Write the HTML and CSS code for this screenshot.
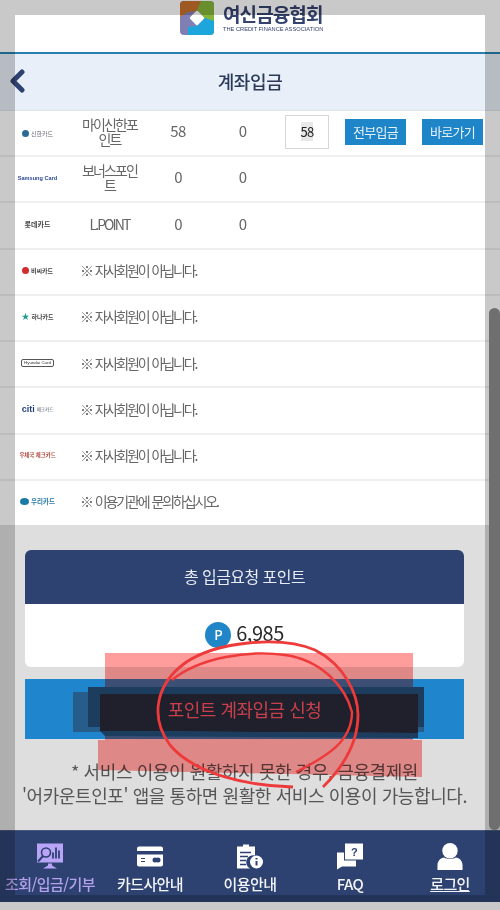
FILE: index.html

```html
<!DOCTYPE html>
<html lang="ko">
<head>
    <meta charset="UTF-8">
    <title>계좌입금</title>
    <link rel="stylesheet" href="styles.css">
</head>
<body>
<div id="page">
    <div class="top">
        <svg class="logo-mark" viewBox="0 0 34 34">
            <defs><clipPath id="logoclip"><rect width="34" height="34" rx="4"/></clipPath></defs>
            <g clip-path="url(#logoclip)">
                <rect width="34" height="34" fill="#7f7fb4"/>
                <path d="M0 0H27L17 10 8 11 0 16Z" fill="#c9702c"/>
                <path d="M21 0H34V24H26L24 16 17 9Z" fill="#84b53a"/>
                <path d="M8 34V26L17 25 25 17 34 20V34Z" fill="#1da6dc"/>
            </g>
            <rect x="11.5" y="11.5" width="11" height="11" rx="1.5" fill="#fff" transform="rotate(45 17 17)"/>
        </svg>
        <div class="logo-text">
            <div class="logo-ko">여신금융협회</div>
            <div class="logo-en">THE CREDIT FINANCE ASSOCIATION</div>
        </div>
    </div>
    <div class="title">
        <svg class="back" viewBox="0 0 16 24"><path d="M13 3L4 12l9 9" fill="none" stroke="#2d4270" stroke-width="5" stroke-linecap="round" stroke-linejoin="round"/></svg>
        <h1>계좌입금</h1>
    </div>
    <div class="list">
        <div class="row">
            <div class="brand brand-first"><i class="dot dot-shinhan"></i><span class="tiny">신한카드</span></div>
            <div class="name">마이신한포인트</div>
            <div class="pt">58</div>
            <div class="pt2">0</div>
            <div class="inp"><span>58</span></div>
            <div class="btn btn-first">전부입금</div>
            <div class="btn">바로가기</div>
        </div>
        <div class="row">
            <div class="brand"><span class="samsung">Samsung Card</span></div>
            <div class="name">보너스포인트</div>
            <div class="pt">0</div>
            <div class="pt2">0</div>
        </div>
        <div class="row">
            <div class="brand"><span class="tiny tiny-dark tiny-lotte">롯데카드</span></div>
            <div class="name">L.POINT</div>
            <div class="pt">0</div>
            <div class="pt2">0</div>
        </div>
        <div class="row">
            <div class="brand"><i class="dot dot-bc"></i><span class="tiny tiny-dark">비씨카드</span></div>
            <div class="msg">※ 자사회원이 아닙니다.</div>
        </div>
        <div class="row">
            <div class="brand"><i class="star">★</i><span class="tiny tiny-dark">하나카드</span></div>
            <div class="msg">※ 자사회원이 아닙니다.</div>
        </div>
        <div class="row">
            <div class="brand"><span class="hyundai">Hyundai Card</span></div>
            <div class="msg">※ 자사회원이 아닙니다.</div>
        </div>
        <div class="row">
            <div class="brand"><span class="citi">citi</span><span class="tiny tiny-small">체크카드</span></div>
            <div class="msg">※ 자사회원이 아닙니다.</div>
        </div>
        <div class="row">
            <div class="brand"><span class="tiny tiny-red">우체국 체크카드</span></div>
            <div class="msg">※ 자사회원이 아닙니다.</div>
        </div>
        <div class="row row-last">
            <div class="brand"><i class="dot dot-woori"></i><span class="tiny tiny-blue">우리카드</span></div>
            <div class="msg">※ 이용기관에 문의하십시오.</div>
        </div>
    </div>
    <div class="bottom">
        <div class="card">
            <div class="card-head">총 입금요청 포인트</div>
            <div class="card-body"><i class="coin">P</i><span>6,985</span></div>
        </div>
        <div class="apply"><span>포인트 계좌입금 신청</span></div>
        <p class="note">* 서비스 이용이 원활하지 못한 경우, 금융결제원<br>'어카운트인포' 앱을 통하면 원활한 서비스 이용이 가능합니다.</p>
    </div>
    <div class="nav">
        <div class="nav-item nav-on">
            <svg viewBox="0 0 28 26"><path d="M1 0H27V19H1Z" fill="#b9a4f7"/><path d="M12 20h4v2l5 3H7l5-3Z" fill="#b9a4f7"/><circle cx="10" cy="9" r="4.5" fill="none" stroke="#2d4270" stroke-width="1.6"/><path d="M7 12.5L2 18" stroke="#2d4270" stroke-width="2"/><path d="M17 15V9m3 6V4m3 11V7" stroke="#2d4270" stroke-width="1.8"/></svg>
            <span>조회/입금/기부</span>
        </div>
        <div class="nav-item">
            <svg viewBox="0 0 28 22"><rect x="1" y="1" width="26" height="20" rx="2" fill="#fff"/><path d="M1 5.5H27V9H1Z" fill="#2d4270"/><path d="M5 13h4M5 16h4" stroke="#2d4270" stroke-width="1.2"/><circle cx="19" cy="14.5" r="2.5" fill="#2d4270"/><circle cx="22" cy="14.5" r="2.5" fill="#2d4270"/></svg>
            <span>카드사안내</span>
        </div>
        <div class="nav-item">
            <svg viewBox="0 0 28 26"><path d="M1 3H7V1h6V3h6V12a7 7 0 0 0-5 13H1Z" fill="#fff"/><path d="M4 9H15M4 13H12M4 17H10M4 21H10" stroke="#2d4270" stroke-width="1.5"/><circle cx="20.5" cy="18.5" r="6.5" fill="#fff"/><path d="M20.5 17.5v4.5M20.5 14.5v1.6" stroke="#2d4270" stroke-width="2"/></svg>
            <span>이용안내</span>
        </div>
        <div class="nav-item">
            <svg viewBox="0 0 28 26"><path d="M9 0H27V16H9Z" fill="#fff"/><path d="M1 9H8V17H20V23H6L1 26Z" fill="#fff"/><text x="18" y="12" class="faq-mark">?</text></svg>
            <span>FAQ</span>
        </div>
        <div class="nav-item nav-login">
            <svg viewBox="0 0 26 28"><circle cx="13" cy="8" r="8" fill="#fff"/><path d="M0 28V23c0-5 4-8 7-8 3 2 9 2 12 0 3 0 7 3 7 8v5Z" fill="#fff"/></svg>
            <span>로그인</span>
        </div>
    </div>
    <div class="foot"></div>

    <svg class="marks-pink" viewBox="0 0 500 910">
        <path d="M105 653H413V740H422V777L98 770V740H105Z" fill="#ff9c9c"/>
    </svg>
    <svg class="marks" viewBox="0 0 500 910">
        <rect x="105" y="679" width="308" height="60" fill="#3d4f75"/>
        <rect x="73" y="692" width="351" height="40" fill="#265d8a"/>
        <rect x="88" y="687" width="336" height="40" fill="#1d3d5e"/>
        <path d="M100 694H418V733L100 731Z" fill="#20202c"/>
        <path d="M100 731L418 733V738L105 736Z" fill="#1d3d5e"/>
        <path d="M293 787C250 786 195 775 170 745 150 718 155 685 185 663 215 642 280 635 315 650 345 665 358 695 358 715 358 745 340 770 323 787" fill="none" stroke="#ee3a3a" stroke-width="2.8"/>
        <path d="M172 680C200 657 250 650 285 655 320 660 345 685 352 712 352 740 330 755 296 772" fill="none" stroke="#ee3a3a" stroke-width="2.4"/>
    </svg>
    <div class="frame"></div>
    <div class="thumb"></div>
</div>
</body>
</html>
```

FILE: styles.css

```css
*{
    margin: 0;
    padding: 0;
    box-sizing: border-box;
}
html,body{
    height: 910px;
    overflow: hidden;
}
body{
    font-family: "Noto Sans CJK KR", "Noto Sans", sans-serif;
    background: #fff;
}
#page{
    position: relative;
    width: 500px;
    height: 910px;
    display: flex;
    flex-direction: column;
    overflow: hidden;
}
/* header */
.top{
    height: 52px;
    display: flex;
    justify-content: center;
    padding: 1px 0 0 3px;
    gap: 9px;
    background: #fff;
}
.logo-mark{
    width: 34px;
    height: 34px;
}
.logo-text{
    width: 100px;
    color: #34426e;
}
.logo-ko{
    font-size: 19px;
    line-height: 24px;
    margin-top: 1px;
    font-weight: 700;
    letter-spacing: -.9px;
    white-space: nowrap;
}
.logo-en{
    font: 5.7px/6px "Liberation Sans", sans-serif;
    white-space: nowrap;
}
.title{
    height: 59px;
    border-top: 2px solid #2a7fb0;
    border-bottom: 1px solid #dde3ea;
    background: #e9eff8;
    display: flex;
    align-items: center;
    justify-content: center;
    position: relative;
}
.title h1{
    font-size: 18px;
    font-weight: 500;
    letter-spacing: -.4px;
    color: #2a3a58;
    margin-top: -2px;
}
.back{
    position: absolute;
    left: 9px;
    top: 15px;
    width: 16px;
    height: 24px;
}
/* card rows */
.list{
    height: 414px;
    display: flex;
    flex-direction: column;
}
.row{
    flex: 1;
    display: flex;
    align-items: center;
    border-bottom: 2px solid #efefef;
    padding-bottom: 3px;
    color: #666;
    font-size: 14px;
    background: #fff;
}
.row-last{
    border-bottom: 0;
}
.brand{
    width: 75px;
    display: flex;
    align-items: center;
    justify-content: center;
    gap: 2px;
}
.brand-first{
    margin-top: 3px;
}
.tiny{
    font-size: 6px;
    color: #667;
    white-space: nowrap;
}
.tiny-dark{
    color: #444;
    font-weight: 700;
}
.tiny-lotte{
    font-size: 7px;
}
.tiny-small{
    font-size: 4.5px;
    color: #456;
}
.tiny-red{
    color: #b5453a;
    font-size: 5.4px;
    font-weight: 700;
}
.tiny-blue{
    color: #2a7ca8;
    font-size: 6.5px;
    font-weight: 700;
}
.dot{
    display: inline-block;
    width: 7px;
    height: 7px;
    border-radius: 50%;
}
.dot-shinhan{
    background: #2c6a94;
}
.dot-bc{
    background: #d22c30;
}
.dot-woori{
    width: 9px;
    background: #1a7ba8;
}
.star{
    font-style: normal;
    font-size: 8px;
    line-height: 8px;
    color: #1f9a8c;
}
.samsung{
    font: 700 5.6px/10px "Liberation Sans", sans-serif;
    color: #2a4a96;
    white-space: nowrap;
}
.hyundai{
    font: 4.4px/6px "Liberation Sans", sans-serif;
    color: #333;
    border: 1px solid #555;
    border-radius: 2px;
    padding: 0 2px;
    white-space: nowrap;
}
.citi{
    font: 700 9px/10px "Liberation Sans", sans-serif;
    color: #23407e;
}
.name{
    width: 69px;
    padding: 0 6px;
    text-align: center;
    line-height: 15px;
    letter-spacing: -1.9px;
    word-break: break-all;
}
.pt{
    width: 68px;
    margin-bottom: 2px;
    text-align: center;
    font-size: 15px;
    letter-spacing: -.6px;
}
.pt2{
    width: 62px;
    margin-bottom: 2px;
    text-align: center;
    font-size: 15px;
}
.inp{
    width: 44px;
    height: 34px;
    margin: 0 16px 0 11px;
    border: 1px solid #d6d6d6;
    display: flex;
    align-items: center;
    justify-content: center;
    font-size: 13px;
    letter-spacing: -.8px;
    color: #222;
}
.inp span{
    background: #e8e8e8;
    line-height: 19px;
}
.btn{
    width: 61px;
    height: 26px;
    background: #1f85c9;
    color: #e6f2fa;
    font-size: 13px;
    line-height: 25px;
    text-align: center;
    letter-spacing: -.7px;
}
.btn-first{
    margin-right: 16px;
}
.msg{
    margin-left: 5px;
    letter-spacing: -2.1px;
    word-spacing: 1px;
    white-space: nowrap;
}
/* lower part */
.bottom{
    height: 305px;
    padding: 25px 36px 0 25px;
    background: #dedede;
}
.card{
    height: 117px;
    border-radius: 6px;
    overflow: hidden;
    background: #fff;
}
.card-head{
    height: 54px;
    background: #2d4270;
    color: #e8ecf4;
    font-size: 16px;
    line-height: 52px;
    text-align: center;
    letter-spacing: -.55px;
}
.card-body{
    height: 63px;
    display: flex;
    justify-content: center;
    align-items: flex-start;
    gap: 5px;
    padding-top: 18px;
    font-size: 20px;
    line-height: 22px;
    color: #2a2a2a;
    letter-spacing: -.5px;
}
.coin{
    width: 26px;
    height: 26px;
    border-radius: 50%;
    background: #2086c8;
    color: #fff;
    font: 500 14px/26px "Noto Sans", sans-serif;
    text-align: center;
}
.apply{
    height: 60px;
    margin-top: 12px;
    background: #1f85cc;
    text-align: center;
    font-size: 18px;
    line-height: 61px;
    letter-spacing: -.5px;
    color: #c8404c;
}
.apply span{
    position: relative;
    z-index: 2;
}
.note{
    margin: 20px -10px 0;
    text-align: center;
    font-size: 18px;
    line-height: 24px;
    letter-spacing: -.42px;
    color: #565656;
    white-space: nowrap;
}
/* bottom menu */
.nav{
    height: 72px;
    background: #2d4270;
    display: flex;
    border-top: 1px solid #47597f;
}
.nav-item{
    flex: 1;
    display: flex;
    flex-direction: column;
    align-items: center;
    color: #f2f4f8;
    font-size: 15px;
    font-weight: 500;
    letter-spacing: -.6px;
    white-space: nowrap;
    padding-top: 12px;
}
.nav-item svg{
    width: 28px;
    height: 27px;
    margin-bottom: 3px;
}
.nav-on{
    color: #b5a2ef;
}
.nav-login span{
    text-decoration: underline;
}
.faq-mark{
    font: 700 11px "Liberation Sans", sans-serif;
    fill: #2d4270;
    text-anchor: middle;
}
.foot{
    flex: 1;
    background: #fff;
}
/* things lying over the page */
.marks-pink{
    position: absolute;
    left: 0;
    top: 0;
    width: 500px;
    height: 910px;
    mix-blend-mode: multiply;
}
.marks{
    position: absolute;
    left: 0;
    top: 0;
    width: 500px;
    height: 910px;
    z-index: 1;
}
.frame{
    position: absolute;
    left: 0;
    top: 0;
    width: 500px;
    height: 910px;
    border: 15px solid rgba(0,0,0,.21);
    z-index: 3;
}
.thumb{
    position: absolute;
    right: 0;
    top: 308px;
    width: 11px;
    height: 522px;
    border-radius: 6px;
    background: #6f6f6f;
    z-index: 4;
}
```
